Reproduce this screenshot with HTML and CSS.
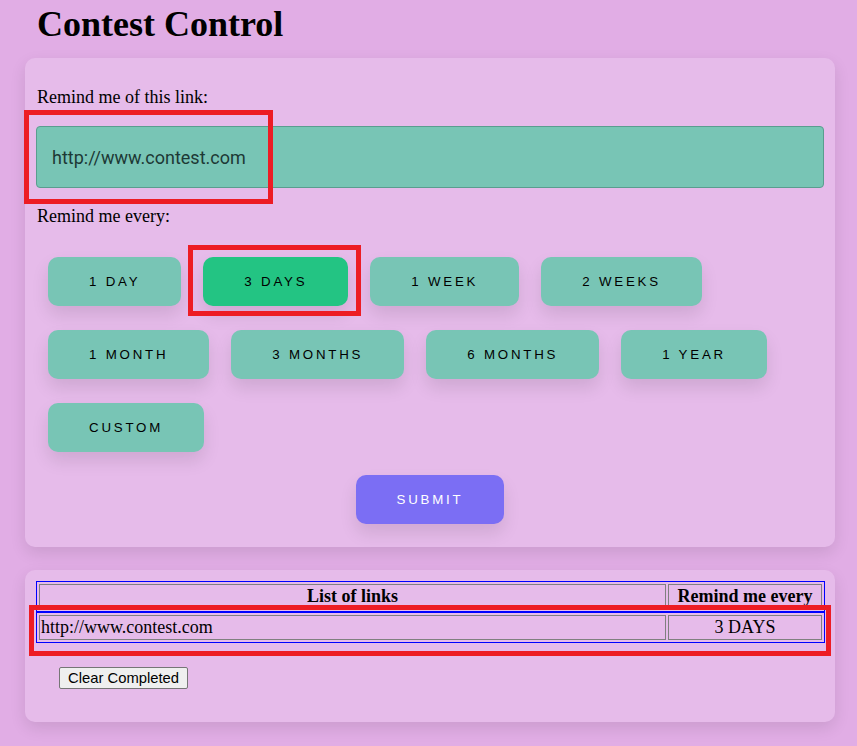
FILE: index.html
```html
<!DOCTYPE html>
<html lang="en">
<head>
<meta charset="utf-8">
<title>Contest Control</title>
<link rel="stylesheet" href="styles.css">
</head>
<body>
<h1 class="title">Contest Control</h1>

<section class="card form-card">
  <p class="label label-link">Remind me of this link:</p>
  <input class="link-input" type="text" value="http://www.contest.com">
  <p class="label label-every">Remind me every:</p>
  <div class="choices">
    <button class="choice">1 Day</button>
    <button class="choice selected">3 Days</button>
    <button class="choice">1 Week</button>
    <button class="choice">2 Weeks</button>
    <button class="choice">1 Month</button>
    <button class="choice">3 Months</button>
    <button class="choice">6 Months</button>
    <button class="choice">1 Year</button>
    <button class="choice">Custom</button>
  </div>
  <div class="submit-row">
    <button class="submit">Submit</button>
  </div>
</section>

<section class="card list-card">
  <table class="links">
    <tr>
      <th class="col-link">List of links</th>
      <th class="col-every">Remind me every</th>
    </tr>
  </table>
  <table class="links">
    <tr>
      <td class="col-link">http://www.contest.com</td>
      <td class="col-every">3 DAYS</td>
    </tr>
  </table>
  <button class="clear">Clear Completed</button>
</section>

<div class="mark mark-input"></div>
<div class="mark mark-choice"></div>
<div class="mark mark-row"></div>
</body>
</html>
```

FILE: styles.css
```css
html {
  background: #e1ade5;
}

body {
  margin: 0;
  padding: 0 22px 30px 25px;
  position: relative;
  font-family: "Liberation Serif", "Times New Roman", serif;
  font-size: 18px;
  color: #000;
  background: #e1ade5;
}

.title {
  margin: 4px 0 14px 12px;
  font-size: 36px;
  line-height: 40px;
  font-weight: bold;
}

.card {
  width: 810px;
  box-sizing: border-box;
  background: #e6bbea;
  border-radius: 10px;
  box-shadow: 0 6px 16px rgba(0, 0, 0, 0.1);
}

.form-card {
  padding: 11px 11px 23px;
}

.label {
  margin: 0;
  line-height: 20px;
  padding-left: 1px;
}

.label-link {
  margin-top: 18px;
}

.link-input {
  display: block;
  width: 100%;
  height: 62px;
  box-sizing: border-box;
  margin: 19px 0 0;
  padding: 0 15px;
  font-family: Roboto, "Liberation Sans", sans-serif;
  font-size: 18px;
  color: #1d3935;
  background: #78c5b5;
  border: 1px solid #5a9d8f;
  border-radius: 4px;
  outline: none;
}

.label-every {
  margin-top: 18px;
}

.choices {
  display: flex;
  flex-wrap: wrap;
  column-gap: 22px;
  row-gap: 24px;
  margin-top: 31px;
  padding: 0 12px;
}

.choice,
.submit {
  height: 49px;
  padding: 0 41px;
  font-family: "Liberation Sans", Arial, sans-serif;
  font-size: 13.3px;
  letter-spacing: 2.78px;
  text-transform: uppercase;
  color: #000;
  background: #78c5b5;
  border: none;
  border-radius: 10px;
  box-shadow: 0 9px 17px rgba(0, 0, 0, 0.1);
  cursor: pointer;
}

.choice.selected {
  background: #23c483;
}

.submit-row {
  display: flex;
  justify-content: center;
  margin-top: 23px;
}

.submit {
  background: #7b6ef4;
  color: #fff;
}

.list-card {
  margin-top: 23px;
  padding: 11px 11px 33px;
}

.links {
  width: 789px;
  border: 1px solid #0000ff;
  border-spacing: 2px;
  font-size: 18px;
}

.links th,
.links td {
  border: 1px solid #808080;
  padding: 1px;
  line-height: 21px;
}

.links th {
  font-weight: bold;
  text-align: center;
}

.links td.col-link {
  text-align: left;
}

.links .col-every {
  width: 150px;
  text-align: center;
}

.clear {
  display: block;
  margin: 24px 0 0 23px;
  height: 22px;
  padding: 0 8px;
  font-family: "Liberation Sans", Arial, sans-serif;
  font-size: 14.8px;
  color: #000;
  background: #efefef;
  border: 1px solid #767676;
  border-radius: 2px;
}

.mark {
  position: absolute;
  box-sizing: border-box;
  border: 5px solid #ed1c24;
  pointer-events: none;
}

.mark-input {
  left: 24px;
  top: 110px;
  width: 249px;
  height: 94px;
}

.mark-choice {
  left: 188px;
  top: 245px;
  width: 173px;
  height: 71px;
}

.mark-row {
  left: 29px;
  top: 605px;
  width: 802px;
  height: 51px;
}
```
